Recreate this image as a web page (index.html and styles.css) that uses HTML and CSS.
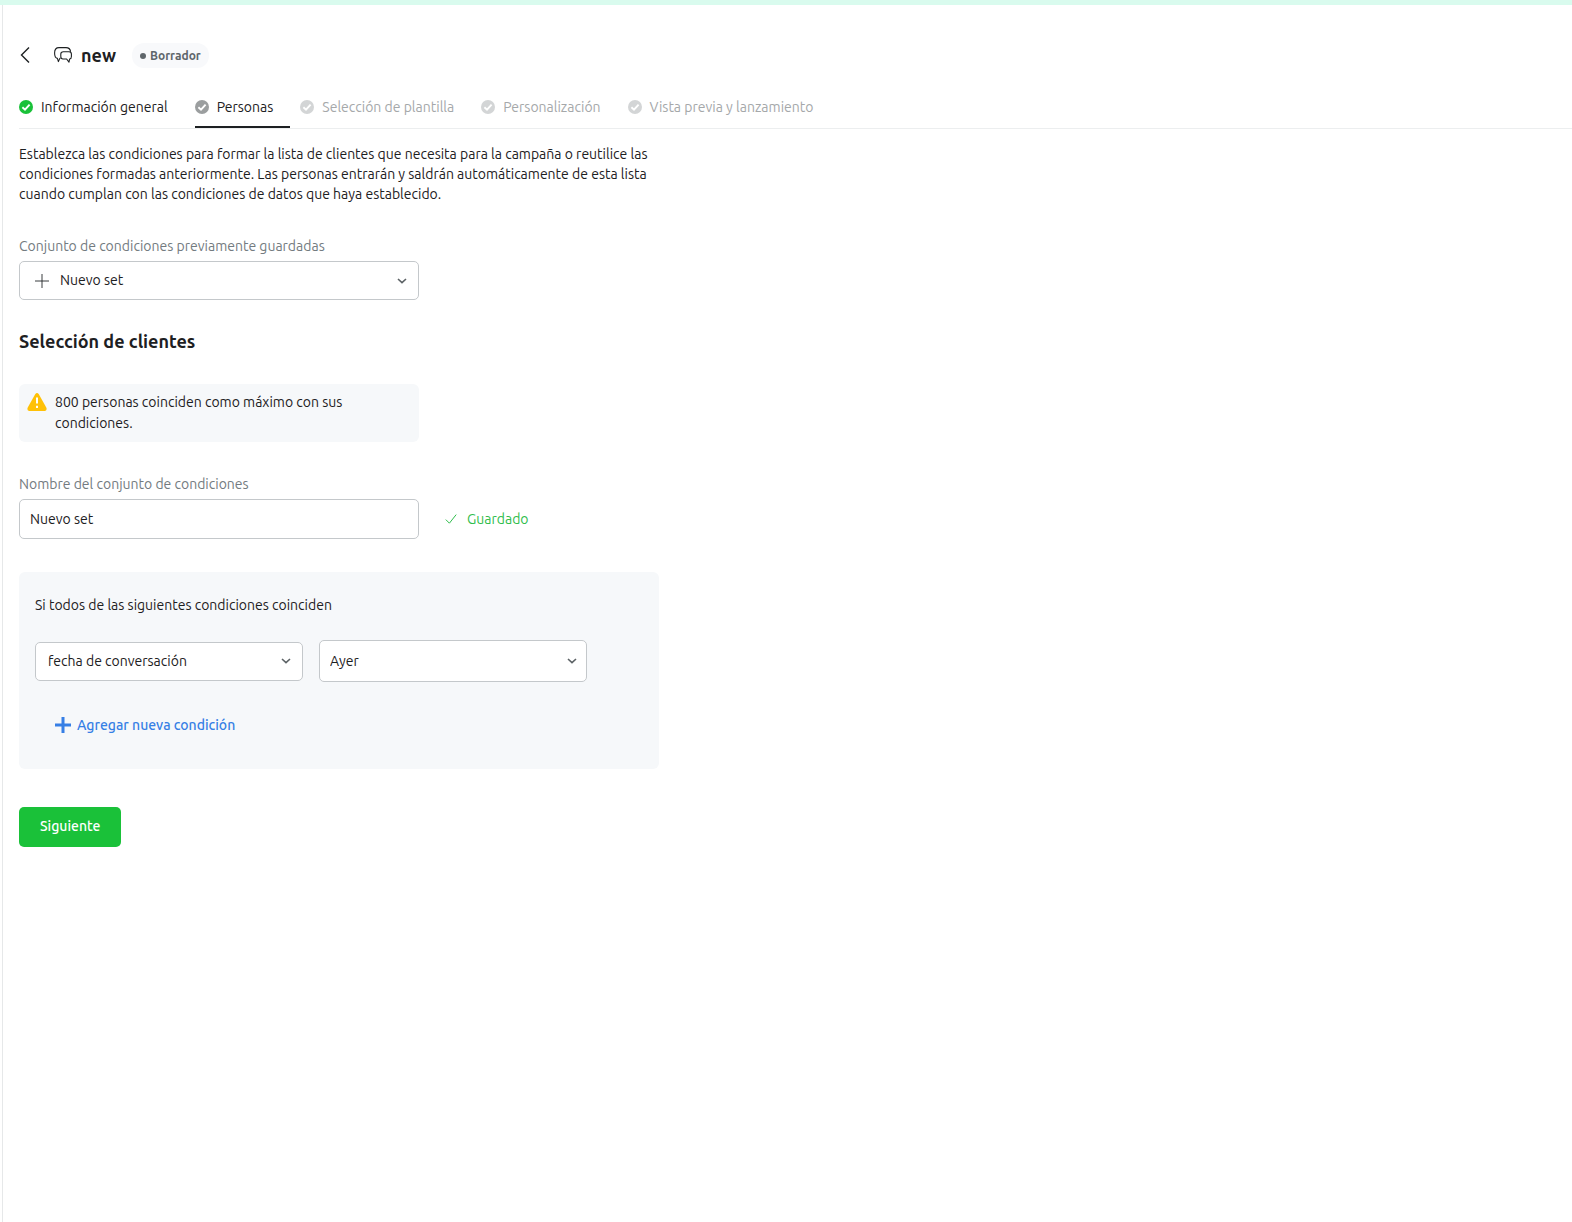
FILE: index.html
```
<!DOCTYPE html>
<html lang="es">
  <head>
    <meta charset="UTF-8" />
    <meta name="viewport" content="width=device-width, initial-scale=1.0" />
    <title>new - Personas</title>
    <link rel="stylesheet" href="styles.css">
  </head>
  <body>
    <!-- shared icons -->
    <svg class="sprite" aria-hidden="true">
      <symbol id="check-circle" viewBox="0 0 14 14">
        <circle cx="7" cy="7" r="7" fill="currentColor" />
        <path d="M3.4 7.2 6 9.6 10.6 4.6" fill="none" stroke="#fff" stroke-width="1.9" />
      </symbol>
      <symbol id="chevron" viewBox="0 0 10 6">
        <path d="M1 1 5 4.6 9 1" fill="none" stroke="currentColor" stroke-width="1.6" />
      </symbol>
      <symbol id="plus" viewBox="0 0 16 16">
        <path d="M8 0V16M0 8H16" fill="none" stroke="currentColor" />
      </symbol>
    </svg>

    <div class="top-bar"></div>
    <main class="page">
      <header class="page-header">
        <button type="button" class="back-button" aria-label="Volver">
          <svg width="10" height="16" viewBox="0 0 10 16">
            <path d="M9 .5 1.5 8 9 15.5" fill="none" stroke="currentColor" stroke-width="1.4" />
          </svg>
        </button>
        <svg class="chat-icon" width="18" height="16" viewBox="0 0 18 16">
          <path d="M6.4 11.4H5.8L4.4 14.6 3.4 11.4C1.4 11 .6 9 .6 6 .6 2 1.8.6 5 .6H12C14.8.6 16.2 1.6 16.6 4.6M9.4 4.8H15Q17.4 4.8 17.4 7V9.4Q17.4 11.6 15.6 12L15 15.2 12.6 12H9Q6.8 12 6.8 9.6V7Q6.8 4.8 9.4 4.8Z" fill="none" stroke="currentColor" stroke-width="1.1" stroke-linejoin="round" />
        </svg>
        <h1>new</h1>
        <span class="status">Borrador</span>
      </header>

      <nav class="tabs">
        <a href="#general" class="tab done">
          <svg class="tab-icon"><use href="#check-circle" /></svg>Información general
        </a>
        <a href="#personas" class="tab active" aria-current="step">
          <svg class="tab-icon"><use href="#check-circle" /></svg>Personas
        </a>
        <a href="#plantilla" class="tab">
          <svg class="tab-icon"><use href="#check-circle" /></svg>Selección de plantilla
        </a>
        <a href="#personalizacion" class="tab">
          <svg class="tab-icon"><use href="#check-circle" /></svg>Personalización
        </a>
        <a href="#vista-previa" class="tab">
          <svg class="tab-icon"><use href="#check-circle" /></svg>Vista previa y lanzamiento
        </a>
      </nav>

      <form class="people-form">
        <p class="intro">
          Establezca las condiciones para formar la lista de clientes que necesita para la campaña o reutilice las
          condiciones formadas anteriormente. Las personas entrarán y saldrán automáticamente de esta lista
          cuando cumplan con las condiciones de datos que haya establecido.
        </p>

        <div class="field">
          <label for="saved-set">Conjunto de condiciones previamente guardadas</label>
          <div class="select with-icon">
            <svg class="select-plus"><use href="#plus" /></svg>
            <select id="saved-set">
              <option>Nuevo set</option>
            </select>
            <svg class="select-arrow"><use href="#chevron" /></svg>
          </div>
        </div>

        <h2>Selección de clientes</h2>

        <div class="notice">
          <svg class="warning-icon" width="20" height="18" viewBox="0 0 20 18">
            <path d="M8.3 1Q10-1 11.7 1L19.4 14.8Q20.2 17.6 18 18H2Q-.2 17.6.6 14.8Z" fill="#ffc107" />
            <path d="M10 4.5V10.5M10 12.8V15" stroke="#fff" stroke-width="2" />
          </svg>
          <p>800 personas coinciden como máximo con sus condiciones.</p>
        </div>

        <div class="field">
          <label for="set-name">Nombre del conjunto de condiciones</label>
          <div class="name-row">
            <input type="text" id="set-name" value="Nuevo set" />
            <span class="saved">
              <svg width="12" height="10" viewBox="0 0 12 10">
                <path d="M.8 5.6 4.4 9.2 11.2.6" fill="none" stroke="currentColor" />
              </svg>
              Guardado
            </span>
          </div>
        </div>

        <section class="conditions">
          <p>Si todos de las siguientes condiciones coinciden</p>
          <div class="condition-row">
            <div class="select">
              <select aria-label="Condición">
                <option>fecha de conversación</option>
              </select>
              <svg class="select-arrow"><use href="#chevron" /></svg>
            </div>
            <div class="select value">
              <select aria-label="Valor">
                <option>Ayer</option>
              </select>
              <svg class="select-arrow"><use href="#chevron" /></svg>
            </div>
          </div>
          <button type="button" class="add-button">
            <svg class="add-icon"><use href="#plus" /></svg>Agregar nueva condición
          </button>
        </section>

        <button type="submit" class="next-button">Siguiente</button>
      </form>
    </main>
  </body>
</html>
```
FILE: styles.css
```
* {
  box-sizing: border-box;
}
body {
  margin: 0;
  min-height: 100vh;
  display: flex;
  flex-direction: column;
  font-family: Ubuntu, "Noto Sans", sans-serif;
  font-size: 14px;
  line-height: 20px;
  color: #1d2022;
  background: #fff;
}
h1,
h2,
p {
  margin: 0;
}
button,
input,
select {
  font: inherit;
  color: inherit;
}
button {
  border: none;
  cursor: pointer;
}
.sprite {
  position: absolute;
  width: 0;
  height: 0;
}
.top-bar {
  height: 5px;
  background: #d9fbee;
}
.page {
  flex: 1;
  margin-left: 2px;
  padding: 36px 0 40px 16px;
  border-left: 1px solid #e6e8e9;
}

/* header */
.page-header {
  display: flex;
  align-items: center;
  height: 28px;
}
.back-button {
  display: flex;
  padding: 0 1px;
  background: none;
}
.chat-icon {
  margin: 0 9px 0 23px;
}
h1 {
  font-size: 18px;
  line-height: 24px;
}
.status {
  display: flex;
  align-items: center;
  gap: 4px;
  margin-left: 16px;
  padding: 3px 8px 2px;
  border-radius: 12px;
  background: #f8f9fb;
  color: #5f666b;
  font-size: 12px;
  font-weight: bold;
}
.status::before {
  content: "";
  width: 6px;
  height: 6px;
  border-radius: 50%;
  background: currentColor;
}

/* steps */
.tabs {
  display: flex;
  gap: 10px;
  height: 60px;
  border-bottom: 1px solid #eceeef;
}
.tab {
  display: flex;
  align-items: center;
  gap: 8px;
  padding: 18px 17px 0 0;
  border-bottom: 2px solid transparent;
  color: #a5a8aa;
  text-decoration: none;
  white-space: nowrap;
}
.tab-icon {
  width: 14px;
  height: 14px;
  color: #d3d5d6;
}
.tab.done,
.tab.active {
  color: #1d2022;
}
.tab.done .tab-icon {
  color: #1ac139;
}
.tab.active {
  border-color: #1d2022;
}
.tab.active .tab-icon {
  color: #9b9e9f;
}

/* form */
.intro {
  max-width: 640px;
  margin: 15px 0 32px;
}
.field {
  display: flex;
  flex-direction: column;
  gap: 5px;
}
.field label {
  color: #737b80;
}
.select {
  position: relative;
  width: 400px;
}
.select select,
.name-row input {
  display: block;
  width: 100%;
  height: 39px;
  padding: 0 12px 1px;
  border: 1px solid #c4c8cb;
  border-radius: 5px;
  background: #fff;
  appearance: none;
}
.select.with-icon select {
  padding-left: 40px;
}
.select-arrow,
.select-plus {
  position: absolute;
  top: 50%;
  transform: translateY(-50%);
  pointer-events: none;
}
.select-arrow {
  right: 12px;
  width: 10px;
  height: 6px;
  color: #5c6265;
}
.select-plus {
  left: 16px;
  width: 14px;
  height: 14px;
}
h2 {
  margin: 29px 0 31px;
  font-size: 18px;
  line-height: 24px;
}
.notice {
  display: flex;
  align-items: flex-start;
  gap: 8px;
  max-width: 400px;
  margin-bottom: 32px;
  padding: 8px;
  border-radius: 6px;
  background: #f6f8fa;
}
.notice p {
  max-width: 320px;
  line-height: 21px;
}
.warning-icon {
  flex: none;
  margin-top: 1px;
}
.name-row {
  display: flex;
  align-items: center;
  gap: 26px;
}
.name-row input {
  width: 400px;
  height: 40px;
  padding: 0 10px 1px;
}
.saved {
  display: flex;
  align-items: center;
  gap: 10px;
  color: #2fbd4c;
}
.conditions {
  max-width: 640px;
  margin: 33px 0 38px;
  padding: 23px 16px 26px;
  border-radius: 6px;
  background: #f6f8fa;
}
.condition-row {
  display: flex;
  align-items: center;
  gap: 16px;
  margin: 25px 0;
}
.condition-row .select {
  width: 268px;
}
.select.value select {
  height: 42px;
  padding: 0 10px 1px;
}
.select.value .select-arrow {
  right: 10px;
}
.add-button {
  display: flex;
  align-items: center;
  gap: 6px;
  padding: 8px 20px;
  background: none;
  color: #367fe5;
  font-weight: 500;
}
.add-icon {
  width: 16px;
  height: 16px;
  stroke-width: 3px;
}
.next-button {
  height: 40px;
  padding: 0 21px 2px;
  border-radius: 5px;
  background: #1ac139;
  color: #fff;
  font-weight: 500;
}
.next-button:hover {
  background: #17ab33;
}
```
